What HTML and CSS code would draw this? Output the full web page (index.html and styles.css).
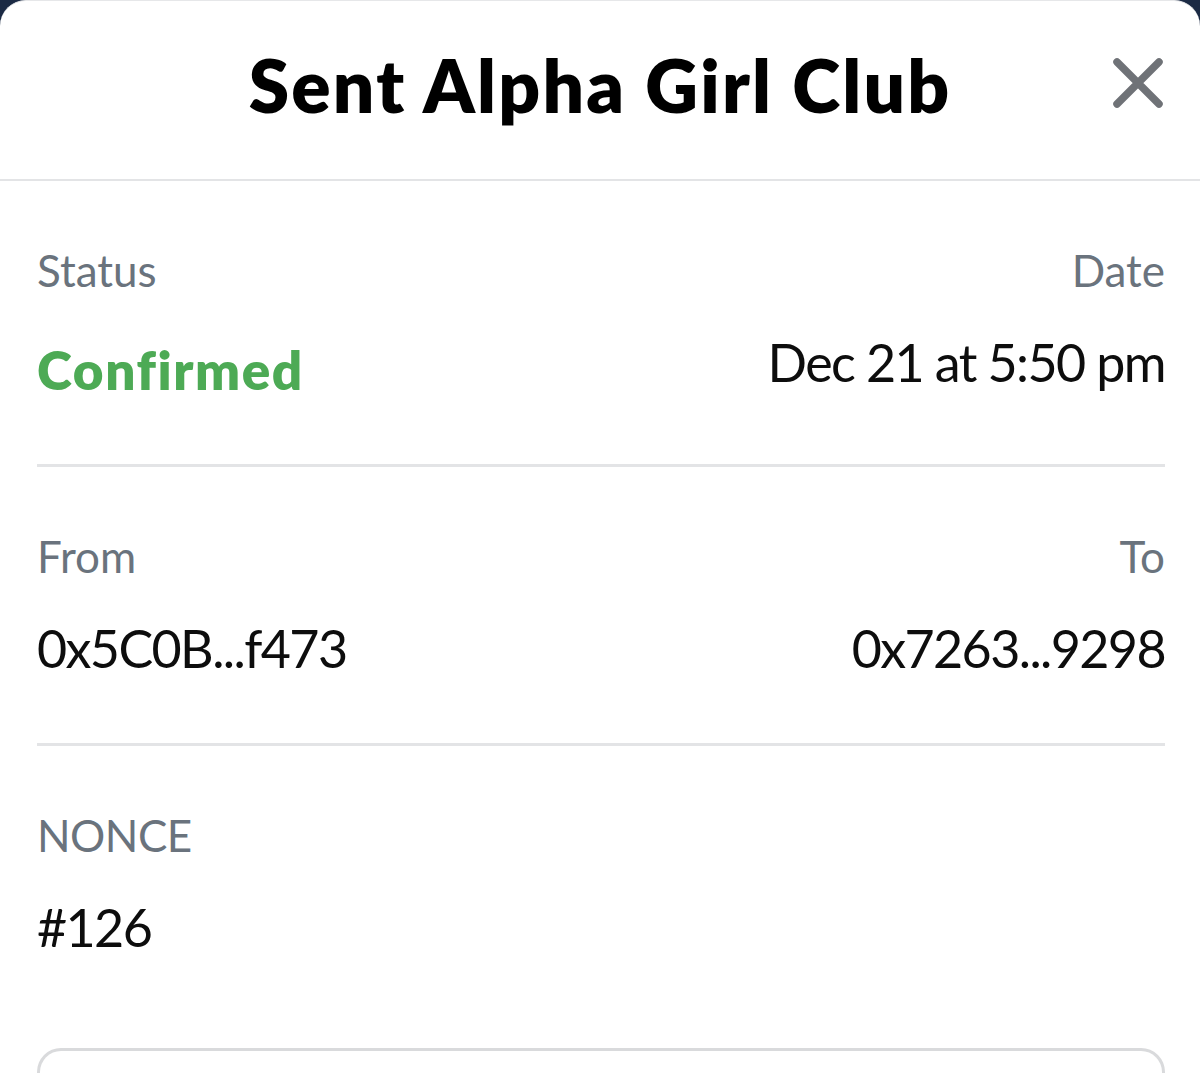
FILE: index.html
```html
<!DOCTYPE html>
<html lang="en">
<head>
<meta charset="utf-8">
<title>Sent Alpha Girl Club</title>
<link rel="stylesheet" href="styles.css">
</head>
<body>
<div class="modal">
  <header class="header">
    <span class="spacer"></span>
    <h1 class="title">Sent Alpha Girl Club</h1>
    <button class="close" aria-label="Close">
      <svg viewBox="0 0 50 50" width="50" height="50"><path d="M4 4 L46 46 M46 4 L4 46" stroke="#6f7277" stroke-width="7.5" stroke-linecap="round" fill="none"/></svg>
    </button>
  </header>
  <main class="content">
    <section class="section">
      <div class="row">
        <span class="label">Status</span>
        <span class="label">Date</span>
      </div>
      <div class="row values">
        <span class="status">Confirmed</span>
        <span class="value">Dec 21 at 5:50 pm</span>
      </div>
    </section>
    <section class="section">
      <div class="row">
        <span class="label">From</span>
        <span class="label">To</span>
      </div>
      <div class="row values">
        <span class="value">0x5C0B...f473</span>
        <span class="value">0x7263...9298</span>
      </div>
    </section>
    <section class="section last">
      <div class="row">
        <span class="label caps">NONCE</span>
      </div>
      <div class="row values">
        <span class="value">#126</span>
      </div>
    </section>
    <div class="summary"></div>
  </main>
</div>
</body>
</html>
```

FILE: styles.css
```css
html, body {
  margin: 0;
  padding: 0;
}
body {
  background: #1b2a44;
  font-family: "Lato", "Noto Sans", sans-serif;
  color: #24272a;
  height: 1073px;
  overflow: hidden;
}
.modal {
  background: #ffffff;
  border-top: 1px solid #e6e7e9;
  border-radius: 26px 26px 0 0;
  height: 1073px;
  box-sizing: border-box;
}
.header {
  height: 180px;
  display: grid;
  grid-template-columns: 1fr auto 1fr;
  align-items: center;
  border-bottom: 2px solid #e3e4e6;
  box-sizing: border-box;
}
.title {
  margin: 0;
  font-size: 73px;
  font-weight: 800;
  color: #000;
  letter-spacing: 2.2px;
  margin-top: -10px;
}
.close {
  justify-self: end;
  margin-right: 36px;
  margin-top: -14px;
  border: 0;
  background: none;
  padding: 0;
  width: 52px;
  height: 52px;
  display: flex;
  align-items: center;
  justify-content: center;
}
.content {
  padding: 0 35px 0 37px;
}
.section {
  border-bottom: 3px solid #e3e4e6;
  padding: 62px 0 0;
  height: 286px;
  box-sizing: border-box;
}
.section + .section {
  height: 279px;
}
.section.last {
  border-bottom: 0;
  height: 302px;
}
.row {
  display: flex;
  justify-content: space-between;
  align-items: flex-start;
}
.values {
  margin-top: 34px;
}
.label {
  font-size: 44px;
  color: #6a737d;
  line-height: 54px;
}
.caps {
  letter-spacing: -0.5px;
}
.value {
  font-size: 52px;
  line-height: 62px;
  color: #0d0d0d;
  letter-spacing: -1.6px;
}
.status {
  font-size: 53px;
  line-height: 62px;
  font-weight: 800;
  color: #4daa55;
  letter-spacing: 1.6px;
  margin-top: 8px;
}
.summary {
  height: 60px;
  border: 3px solid #d9dadc;
  border-bottom: 0;
  border-radius: 24px 24px 0 0;
}
```
